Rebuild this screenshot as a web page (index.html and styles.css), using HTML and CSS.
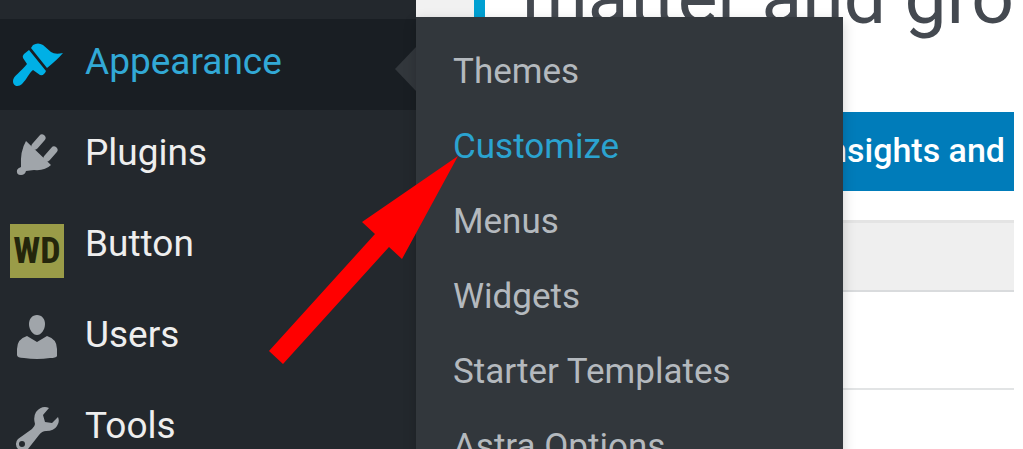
FILE: index.html
```html
<!DOCTYPE html>
<html lang="en">
<head>
<meta charset="utf-8">
<title>Dashboard</title>
<link rel="stylesheet" href="styles.css">
</head>
<body>
<div class="layout">
  <nav class="sidebar" aria-label="Main menu">
    <ul class="menu">
      <li class="menu-item current">
        <a class="menu-link" href="#">
          <svg class="icon" viewBox="0 0 76 91" aria-hidden="true">
            <path d="M31 29L33 26Q38 23 43 26L51 33Q55 36 63 34Q57 41 47 49Z"/>
            <path d="M29 31L46 52Q44 57 40 56L33 51C29 54 27 60 22 65C19 68 13 68 13 62C13 57 21 53 27 45L23 39Q22 37 24 35Z"/>
          </svg>
          <span class="label">Appearance</span>
        </a>
        <ul class="submenu">
          <li><a class="sub-link" href="#">Themes</a></li>
          <li><a class="sub-link active" href="#">Customize</a></li>
          <li><a class="sub-link" href="#">Menus</a></li>
          <li><a class="sub-link" href="#">Widgets</a></li>
          <li><a class="sub-link" href="#">Starter Templates</a></li>
          <li><a class="sub-link" href="#">Astra Options</a></li>
        </ul>
      </li>
      <li class="menu-item">
        <a class="menu-link" href="#">
          <svg class="icon" viewBox="0 0 76 91" aria-hidden="true">
            <path d="M26 31L51 55Q45 61 34 60L26 61Q25 65 21 65Q16 65 17 60Q18 58 21 57Q20 41 26 31Z"/>
            <path class="prong" d="M35 36L42 28M47 48L54 40"/>
          </svg>
          <span class="label">Plugins</span>
        </a>
      </li>
      <li class="menu-item">
        <a class="menu-link" href="#">
          <span class="icon badge-cell"><span class="badge">WD</span></span>
          <span class="label">Button</span>
        </a>
      </li>
      <li class="menu-item">
        <a class="menu-link" href="#">
          <svg class="icon" viewBox="0 0 76 91" aria-hidden="true">
            <path d="M37 23C42 23 45 27 45 32C45 38 41 43 37 43C33 43 29 38 29 32C29 27 32 23 37 23Z"/>
            <path d="M27 44L37 50L47 44Q57 47 57 57V64Q56 66 50 66Q37 68 24 66Q17 66 17 63V57Q17 47 27 44Z"/>
          </svg>
          <span class="label">Users</span>
        </a>
      </li>
      <li class="menu-item">
        <a class="menu-link" href="#">
          <svg class="icon" viewBox="0 0 76 91" aria-hidden="true">
            <path fill-rule="evenodd" d="M49 25Q42 22 36 29Q33 34 35 41Q35 43 32 46L18 56A7 7 0 1 0 28 66L39 52Q42 48 46 48Q54 48 57 43Q60 39 58 34L52 40L45 39L43 32ZM22 58A3 3 0 1 1 22 64A3 3 0 1 1 22 58Z"/>
          </svg>
          <span class="label">Tools</span>
        </a>
      </li>
    </ul>
  </nav>
  <main class="content">
    <h1 class="notice">matter and gro</h1>
    <div class="panel">
      <p class="banner">Insights and</p>
      <div class="table-head"></div>
      <div class="table-row"></div>
    </div>
  </main>
  <svg class="pointer" width="190" height="208" viewBox="0 0 190 208" aria-hidden="true">
    <path d="M190 0L94 66L107 78L1 195L15 208L121 91L134 103Z"/>
  </svg>
</div>
</body>
</html>
```
FILE: styles.css
```css
* {
  box-sizing: border-box;
}

body {
  margin: 0;
  overflow: hidden;
  font-family: Roboto, "Liberation Sans", sans-serif;
  background: #fff;
}

ul {
  margin: 0;
  padding: 0;
  list-style: none;
}

a {
  text-decoration: none;
}

.layout {
  position: relative;
  display: flex;
  height: 100vh;
  overflow: hidden;
}

.sidebar {
  flex: 0 0 416px;
  padding-top: 19px;
  background: #23282d;
}

.menu-item {
  position: relative;
}

.menu-link {
  display: flex;
  height: 91px;
  color: #eee;
  font-size: 37px;
  line-height: 86px;
}

.icon {
  flex: none;
  width: 76px;
  height: 91px;
  margin-right: 9px;
  fill: #a0a5aa;
}

.prong {
  fill: none;
  stroke: #a0a5aa;
  stroke-width: 7;
  stroke-linecap: round;
}

.current > .menu-link {
  background: #191e23;
  color: #32a9d6;
}

.current .icon {
  fill: #00b0e6;
}

.current > .menu-link::after {
  content: "";
  position: absolute;
  top: 28px;
  right: 0;
  border: 22px solid transparent;
  border-left-width: 0;
  border-right: 21px solid #32373c;
}

.badge-cell {
  display: flex;
  align-items: center;
  padding: 8px 0 0 10px;
}

.badge {
  width: 54px;
  height: 54px;
  background: #9a9c48;
  color: #24260c;
  font-family: "Liberation Sans Narrow", "Roboto Condensed", Roboto, sans-serif;
  font-size: 36px;
  font-weight: 700;
  line-height: 54px;
  text-align: center;
}

.submenu {
  position: absolute;
  z-index: 1;
  top: -2px;
  left: 100%;
  width: 427px;
  padding: 17px 0;
  background: #32373c;
  box-shadow: 0 4px 12px rgba(0, 0, 0, 0.2);
}

.sub-link {
  display: block;
  padding-left: 37px;
  color: #b4b9be;
  font-size: 35px;
  line-height: 75px;
}

.sub-link.active {
  color: #2ba3d0;
}

.content {
  flex: 1;
  min-width: 0;
  padding-right: 9px;
  background: linear-gradient(90deg, #f1f1f1 58px, #fff 58px);
}

.notice {
  height: 115px;
  margin: -3px 0 0 58px;
  padding-left: 37px;
  border-left: 11px solid #00a0d2;
  color: #444950;
  font-size: 75px;
  font-weight: 400;
  line-height: 0;
  white-space: nowrap;
}

.panel {
  margin-left: 58px;
}

.banner {
  margin: 0 0 29px;
  padding-right: 9px;
  background: #007cba;
  color: #fff;
  font-size: 34px;
  font-weight: 500;
  line-height: 77px;
  text-align: right;
  border-bottom: 2px solid #007cba;
}

.table-head {
  height: 72px;
  border-top: 3px solid #e4e4e4;
  border-bottom: 2px solid #d9dbdd;
  background: #efefef;
}

.table-row {
  height: 98px;
  border-bottom: 2px solid #e2e4e5;
}

.pointer {
  position: absolute;
  z-index: 2;
  top: 156px;
  left: 268px;
  fill: #f00;
}
```
